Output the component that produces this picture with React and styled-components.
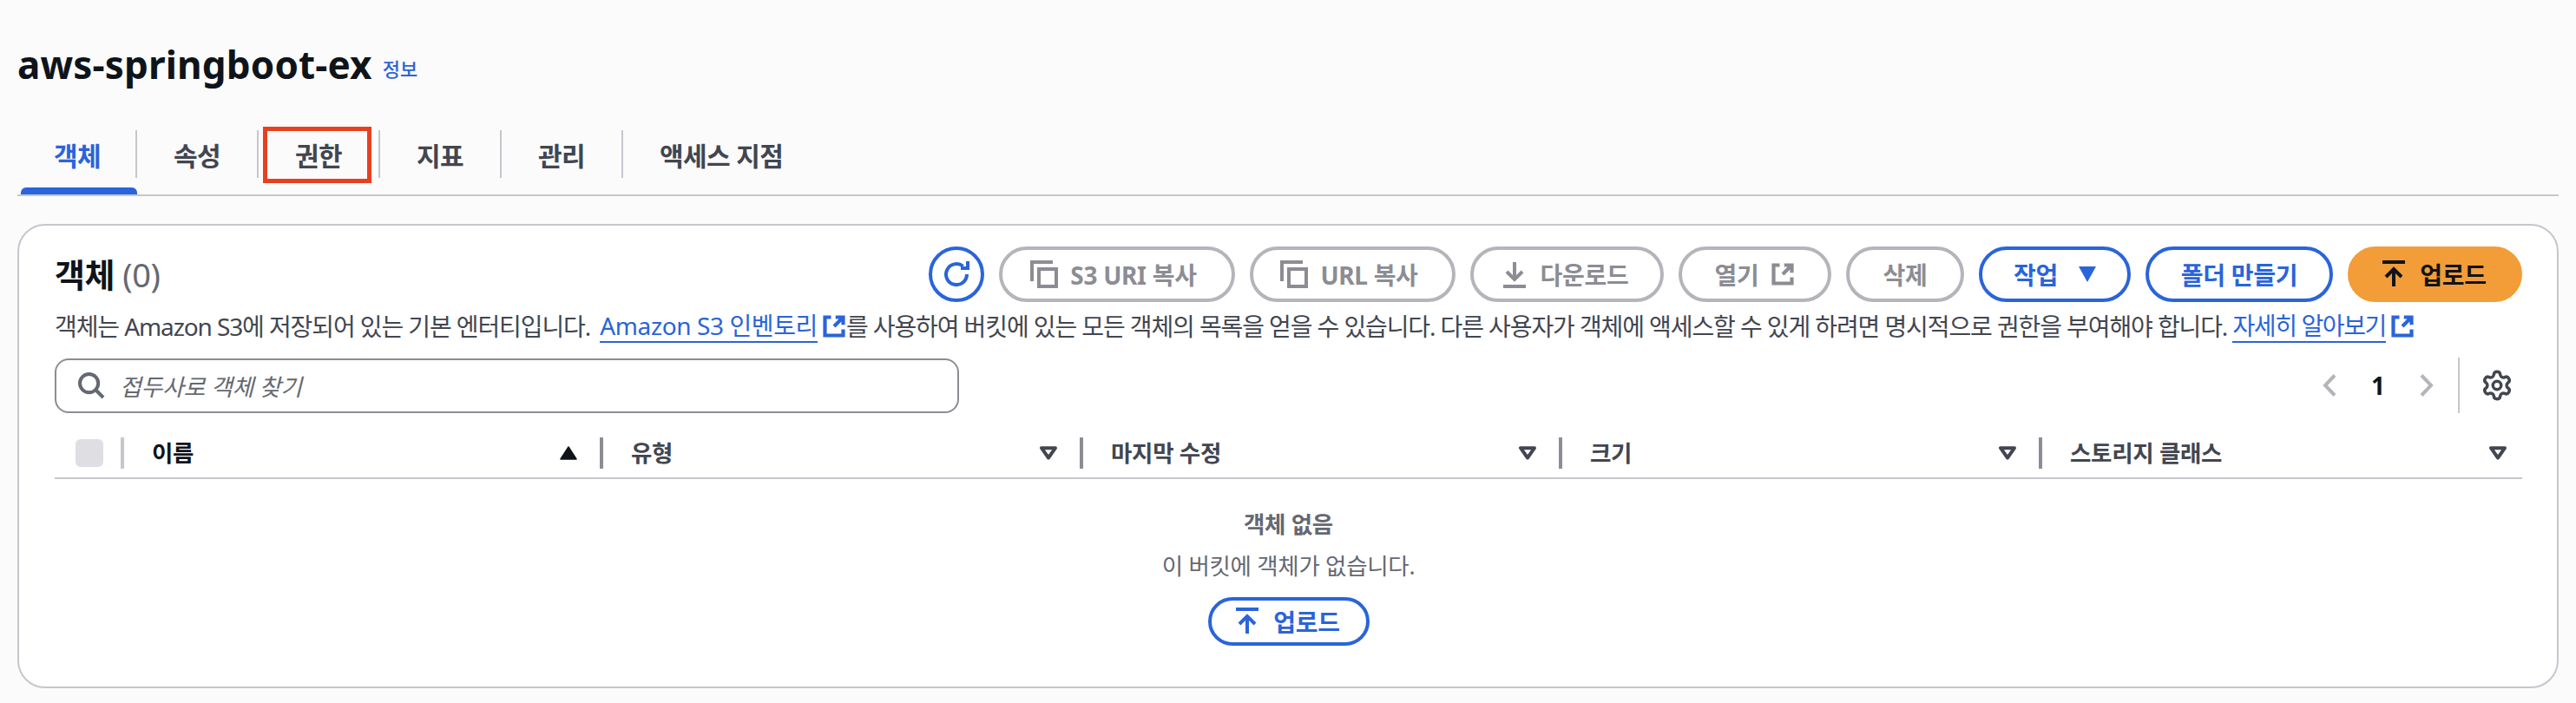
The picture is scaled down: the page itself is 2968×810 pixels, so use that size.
import React from 'react';
import styled, { createGlobalStyle } from 'styled-components';
import { Settings } from 'lucide-react';

const Global = createGlobalStyle`
  html, body { margin: 0; padding: 0; background: #fbfbfc; }
  body { font-family: "Noto Sans", "Noto Sans CJK KR", sans-serif; color: #0f141a; }
`;

const BLUE = '#2a64da';

const Page = styled.div`
  width: 2968px; height: 810px; box-sizing: border-box; padding: 46px 20px 0; overflow: hidden;
`;
const TitleRow = styled.div`display: flex; align-items: center; gap: 12px; height: 56px;`;
const Title = styled.h1`margin: 0; font-size: 44px; line-height: 56px; font-weight: 700; letter-spacing: 0.15px; color: #0f141a;`;
const InfoLink = styled.a`font-size: 22px; margin-top: 8px; color: ${BLUE}; font-weight: 500;`;

const TabBar = styled.div`
  display: flex; margin-top: 46px; height: 78px; padding-left: 4px; box-sizing: border-box;
  border-bottom: 2px solid #c6c6cd;
`;
const Tab = styled.div`
  position: relative; height: 76px; box-sizing: border-box; padding: 2px 0 19px;
  color: ${p => (p.$active ? BLUE : '#424650')};
  &::after {
    content: ''; position: absolute; left: 0; right: 0; bottom: 0; height: 8px;
    border-radius: 6px 6px 0 0; background: ${p => (p.$active ? BLUE : 'transparent')};
  }
`;
const TabLabel = styled.div`
  height: 55px; box-sizing: border-box; padding-left: ${p => (p.$first ? 38 : 42)}px;
  padding-right: ${p => (p.$first ? 40 : 42)}px;
  display: flex; align-items: center;
  font-size: 30px; font-weight: 700; white-space: nowrap; letter-spacing: -0.6px;
  border-right: ${p => (p.$last ? 'none' : '2px solid #c6c6cd')};
`;
const Highlight = styled.div`
  position: absolute; left: 5px; top: -2px; width: 125px; height: 65px; box-sizing: border-box;
  border: 5px solid #e8401f;
`;

const Card = styled.section`
  margin-top: 32px; height: 535px; box-sizing: border-box; padding: 24px 40px 0 41px;
  background: #fff; border: 2px solid #c6c6cd; border-radius: 32px;
`;
const Header = styled.div`display: flex; align-items: center; justify-content: space-between;`;
const Heading = styled.h2`margin: 0; font-size: 38px; font-weight: 700; line-height: 48px; letter-spacing: -0.5px;`;
const Count = styled.span`font-weight: 400; color: #656871;`;
const Actions = styled.div`display: flex; gap: 17px; align-items: center;`;

const Button = styled.button`
  display: inline-flex; align-items: center; justify-content: center; gap: ${p => p.$gap || 14}px;
  box-sizing: border-box; height: ${p => p.$h || 64}px; width: ${p => p.$w}px; padding: 0 ${p => p.$shift || 0}px 0 0;
  border-radius: 40px; font-family: inherit; font-size: 28px; font-weight: 700; letter-spacing: -0.3px;
  white-space: nowrap; background: ${p => (p.$kind === 'primary' ? '#f29d38' : '#fff')};
  border: 4px solid ${p => (p.$kind === 'primary' ? '#f29d38' : p.$kind === 'normal' ? BLUE : '#b4b4bb')};
  color: ${p => (p.$kind === 'primary' ? '#0f141a' : p.$kind === 'normal' ? BLUE : '#8c8c94')};
`;

const Description = styled.p`
  margin: 8px 0 0; font-size: 28px; line-height: 40px; color: #424650; letter-spacing: -1.1px; white-space: nowrap;
  display: flex; align-items: center;
`;
const Link = styled.a`
  color: ${BLUE}; display: inline-flex; align-items: center; gap: 5px;
  margin-left: ${p => p.$ml || 0}px; letter-spacing: ${p => p.$ls}px;
`;
const LinkText = styled.span`border-bottom: 2px solid ${BLUE}; line-height: 36px;`;
const Gap = styled.span`white-space: pre;`;

const Controls = styled.div`display: flex; align-items: center; justify-content: space-between; margin-top: 16px; height: 64px;`;
const Search = styled.div`
  width: 1042px; height: 63px; box-sizing: border-box; border: 2px solid #8c8c94; border-radius: 16px;
  display: flex; align-items: center; gap: 17px; padding-left: 24px; color: #656871;
`;
const Placeholder = styled.span`font-size: 27px; font-style: italic; color: #656871; letter-spacing: -0.3px;`;

const Pager = styled.div`display: flex; align-items: center; height: 64px; color: #b4b4bb; padding-right: 10px;`;
const PageNum = styled.span`font-size: 28px; font-weight: 700; color: #0f141a; margin: 0 40px;`;
const PagerDivider = styled.span`width: 2px; height: 64px; background: #c6c6cd; margin: 0 24px 0 28px;`;

const TableHead = styled.div`
  display: grid; grid-template-columns: 80px 548px 553px 552px 553px 556px;
  margin-top: 28px; height: 48px; box-sizing: border-box; border-bottom: 2px solid #c6c6cd; padding-bottom: 10px;
`;
const CheckCell = styled.div`display: flex; align-items: center; padding-left: 24px; gap: 20px;`;
const CheckBox = styled.span`width: 32px; height: 32px; border-radius: 6px; background: #dedee3;`;
const HeadDivider = styled.span`width: 4px; height: 36px; background: #c6c6cd;`;
const HeadCell = styled.div`
  display: flex; align-items: center; justify-content: space-between; padding-right: ${p => p.$pr || 25}px;
`;
const HeadLabel = styled.span`
  font-size: 26.5px; font-weight: 700; letter-spacing: -0.3px;
  color: ${p => (p.$strong ? '#0f141a' : '#424650')}; padding-left: 32px;
  border-left: ${p => (p.$plain ? 'none' : '4px solid #8c8c94')}; height: 36px; line-height: 36px;
`;

const Empty = styled.div`display: flex; flex-direction: column; align-items: center; padding-top: 32px; color: #656871;`;
const EmptyTitle = styled.div`font-size: 26.5px; font-weight: 700; line-height: 40px; letter-spacing: -0.3px;`;
const EmptyText = styled.div`font-size: 26.5px; line-height: 40px; margin-top: 8px; letter-spacing: -0.3px; margin-bottom: 16px;`;

const Svg = ({ size = 32, children, stroke = 2 }) => (
  <svg width={size} height={size} viewBox="0 0 16 16" fill="none" stroke="currentColor" strokeWidth={stroke} style={{ flex: 'none' }}>{children}</svg>
);
const CopyIcon = () => <Svg><path d="M1 12V1h12" /><path d="M5 5h10v10H5z" /></Svg>;
const DownloadIcon = () => <Svg><path d="M8 1v10M3.5 6.5 8 11l4.5-4.5M1.5 15h13" /></Svg>;
const UploadIcon = () => <Svg><path d="M1.5 1h13" /><path d="M8 15V5M3.5 9.5 8 5l4.5 4.5" /></Svg>;
const ExternalIcon = ({ size = 28 }) => <Svg size={size} stroke={2.4}><path d="M6 2H2v12h12v-4" /><path d="M9 2h5v5M14 2 8 8" /></Svg>;
const RefreshIcon = () => <Svg><path d="M14 8a6 6 0 1 1-2.2-4.6" /><path d="M14.5 0.5v4h-4" /></Svg>;
const SearchIcon = () => <Svg><circle cx="6.8" cy="6.8" r="5.3" /><path d="m10.5 10.5 4.5 4.5" /></Svg>;
const CaretDown = () => <svg width="20" height="18" viewBox="0 0 20 18" style={{ flex: 'none' }}><path d="M0 0h20L10 18z" fill="currentColor" /></svg>;
const SortDown = () => <svg width="22" height="16" viewBox="0 0 22 16" style={{ flex: 'none' }}><path d="M3 2.2h16l-8 11.3z" fill="none" stroke="#424650" strokeWidth="4" strokeLinejoin="round" /></svg>;
const SortUp = () => <svg width="22" height="16" viewBox="0 0 22 16" style={{ flex: 'none' }}><path d="M2 15h18L11 1z" fill="#0f141a" stroke="#0f141a" strokeWidth="1.5" strokeLinejoin="round" /></svg>;
const Chevron = ({ flip }) => (
  <svg width="16" height="26" viewBox="0 0 16 26" fill="none" stroke="currentColor" strokeWidth="4" style={{ flex: 'none', transform: flip ? 'scaleX(-1)' : 'none' }}><path d="M14 1.5 3 13l11 11.5" /></svg>
);

const tabs = [
  { label: '객체', active: true, first: true },
  { label: '속성' },
  { label: '권한', marked: true },
  { label: '지표' },
  { label: '관리' },
  { label: '액세스 지점', last: true },
];
const columns = ['유형', '마지막 수정', '크기', '스토리지 클래스'];

export default function App() {
  return (
    <Page>
      <Global />
      <TitleRow>
        <Title>aws-springboot-ex</Title>
        <InfoLink>정보</InfoLink>
      </TitleRow>
      <TabBar>
        {tabs.map(t => (
          <Tab key={t.label} $active={t.active}>
            <TabLabel $last={t.last} $first={t.first}>{t.label}</TabLabel>
            {t.marked && <Highlight />}
          </Tab>
        ))}
      </TabBar>
      <Card>
        <Header>
          <Heading>객체 <Count>(0)</Count></Heading>
          <Actions>
            <Button $kind="normal" $w={64}><RefreshIcon /></Button>
            <Button $w={272} $shift={8}><CopyIcon />S3 URI 복사</Button>
            <Button $w={237} $shift={8}><CopyIcon />URL 복사</Button>
            <Button $w={223} $shift={6}><DownloadIcon />다운로드</Button>
            <Button $w={176}>열기 <ExternalIcon /></Button>
            <Button $w={136}>삭제</Button>
            <Button $kind="normal" $w={175} $gap={24}>작업 <CaretDown /></Button>
            <Button $kind="normal" $w={216}>폴더 만들기</Button>
            <Button $kind="primary" $w={201} $shift={4}><UploadIcon />업로드</Button>
          </Actions>
        </Header>
        <Description>
          객체는 Amazon S3에 저장되어 있는 기본 엔터티입니다.<Gap> </Gap>
          <Link $ml={5} $ls={-0.4}><LinkText>Amazon S3 인벤토리</LinkText><ExternalIcon /></Link>
          를 사용하여 버킷에 있는 모든 객체의 목록을 얻을 수 있습니다. 다른 사용자가 객체에 액세스할 수 있게 하려면 명시적으로 권한을 부여해야 합니다.<Gap> </Gap>
          <Link $ls={-1.4}><LinkText>자세히 알아보기</LinkText><ExternalIcon /></Link>
        </Description>
        <Controls>
          <Search><SearchIcon /><Placeholder>접두사로 객체 찾기</Placeholder></Search>
          <Pager>
            <Chevron />
            <PageNum>1</PageNum>
            <Chevron flip />
            <PagerDivider />
            <Settings size={38} strokeWidth={2.2} color="#424650" />
          </Pager>
        </Controls>
        <TableHead>
          <CheckCell><CheckBox /><HeadDivider /></CheckCell>
          <HeadCell><HeadLabel $plain $strong>이름</HeadLabel><SortUp /></HeadCell>
          {columns.map((c, i) => (
            <HeadCell key={c} $pr={i === columns.length - 1 ? 16 : 25}><HeadLabel>{c}</HeadLabel><SortDown /></HeadCell>
          ))}
        </TableHead>
        <Empty>
          <EmptyTitle>객체 없음</EmptyTitle>
          <EmptyText>이 버킷에 객체가 없습니다.</EmptyText>
          <Button $kind="normal" $w={186} $h={56} $shift={4}><UploadIcon />업로드</Button>
        </Empty>
      </Card>
    </Page>
  );
}
